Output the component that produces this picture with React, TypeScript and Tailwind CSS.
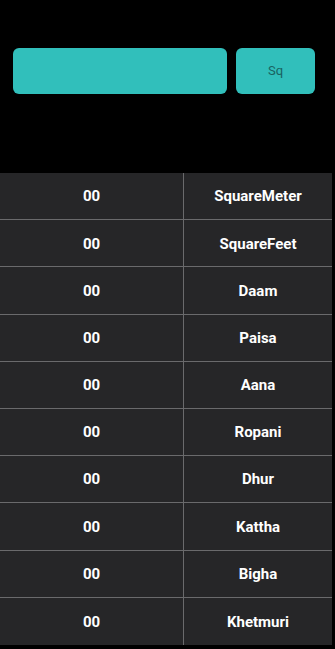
const units = [
  "SquareMeter",
  "SquareFeet",
  "Daam",
  "Paisa",
  "Aana",
  "Ropani",
  "Dhur",
  "Kattha",
  "Bigha",
  "Khetmuri",
];

export default function App() {
  return (
    <div className="w-[335px] h-[649px] bg-black font-['Roboto',sans-serif] overflow-hidden">
      <div className="flex gap-[9px] pt-[48px] pl-[13px] pr-[20px]">
        <input className="w-[214px] h-[46px] rounded-[6px] bg-[#31bfbb] outline-none px-3 text-[#0d4f4c]" />
        <button className="flex-1 h-[46px] rounded-[6px] bg-[#31bfbb] text-[13px] text-[#1a6361]">
          Sq
        </button>
      </div>

      <div className="mt-[79px] w-[332px] bg-[#262628]">
        {units.map((name, i) => (
          <div
            key={name}
            className={`flex h-[47.2px] ${i < units.length - 1 ? "border-b border-[#6a6a6c]" : ""}`}
          >
            <div className="w-[184px] border-r border-[#6a6a6c] flex items-center justify-center pt-px text-white font-bold text-[15px]">
              00
            </div>
            <div className="flex-1 flex items-center justify-center pt-px text-white font-bold text-[15px]">
              {name}
            </div>
          </div>
        ))}
      </div>
    </div>
  );
}
